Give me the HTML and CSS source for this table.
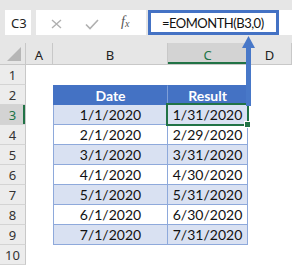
FILE: index.html
```html
<!DOCTYPE html>
<html lang="en">
<head>
  <meta charset="UTF-8">
  <title>EOMONTH</title>
  <link rel="stylesheet" href="styles.css">
</head>
<body>
  <div class="toolbar">
    <div class="namebox">C3</div>
    <div class="fxbox">
      <svg class="ico cancel" width="11" height="10" viewBox="0 0 11 10">
        <path d="M1 1 L10 9 M10 1 L1 9" stroke="#b0b0b0" stroke-width="1.4" fill="none"/>
      </svg>
      <svg class="ico enter" width="14" height="11" viewBox="0 0 14 11">
        <path d="M1 5.5 L5 9.5 L13 1" stroke="#b0b0b0" stroke-width="1.6" fill="none"/>
      </svg>
      <span class="ico fx">f<sub>x</sub></span>
    </div>
    <div class="formula"><span class="formula-text">=EOMONTH(B3,0)</span></div>
  </div>

  <div class="sheet">
    <div class="row colheads">
      <div class="corner"><span class="tri"></span></div>
      <div class="colh">A</div>
      <div class="colh">B</div>
      <div class="colh active">C</div>
      <div class="colh">D</div>
    </div>
    <div class="row"><div class="rowh">1</div><div></div><div></div><div></div><div></div></div>
    <div class="row"><div class="rowh">2</div><div></div><div class="t th first">Date</div><div class="t th">Result</div><div></div></div>
    <div class="row"><div class="rowh active">3</div><div></div><div class="t band first">1/1/2020</div><div class="t band sel">1/31/2020</div><div></div></div>
    <div class="row"><div class="rowh">4</div><div></div><div class="t first">2/1/2020</div><div class="t">2/29/2020</div><div></div></div>
    <div class="row"><div class="rowh">5</div><div></div><div class="t band first">3/1/2020</div><div class="t band">3/31/2020</div><div></div></div>
    <div class="row"><div class="rowh">6</div><div></div><div class="t first">4/1/2020</div><div class="t">4/30/2020</div><div></div></div>
    <div class="row"><div class="rowh">7</div><div></div><div class="t band first">5/1/2020</div><div class="t band">5/31/2020</div><div></div></div>
    <div class="row"><div class="rowh">8</div><div></div><div class="t first">6/1/2020</div><div class="t">6/30/2020</div><div></div></div>
    <div class="row"><div class="rowh">9</div><div></div><div class="t band first">7/1/2020</div><div class="t band">7/31/2020</div><div></div></div>
    <div class="row"><div class="rowh">10</div><div></div><div></div><div></div><div></div></div>
  </div>

  <svg class="arrow" width="13" height="70" viewBox="0 0 13 70">
    <polygon points="6.5,0 13,12 0,12" fill="#4878c8"/>
    <rect x="4" y="11" width="5" height="59" fill="#4878c8"/>
  </svg>
</body>
</html>
```

FILE: styles.css
```css
body {
  margin: 0;
  width: 292px;
  height: 266px;
  overflow: hidden;
  background-color: #fff;
  font-family: Lato, "Liberation Sans", sans-serif;
  position: relative;
}

.toolbar {
  display: flex;
  gap: 5px;
  height: 43px;
  padding: 10px 0 0 5px;
  box-sizing: border-box;
  background-color: #e6e6e6;
}

.namebox {
  width: 26px;
  height: 25px;
  background-color: #fff;
  font-family: "Noto Sans", sans-serif;
  font-size: 13px;
  color: #222;
  display: flex;
  align-items: center;
  padding-left: 6px;
  box-sizing: border-box;
}

.fxbox {
  width: 110px;
  height: 25px;
  background-color: #fff;
  position: relative;
}

.ico {
  position: absolute;
}

.cancel {
  left: 15px;
  top: 9px;
}

.enter {
  left: 49px;
  top: 9px;
}

.fx {
  left: 85px;
  top: 4px;
  font-family: "Liberation Serif", serif;
  font-style: italic;
  font-size: 14px;
  color: #555;
}

.fx sub {
  font-size: 10px;
  vertical-align: -1px;
}

.formula {
  flex: 1;
  height: 25px;
  margin-left: -3px;
  background-color: #fff;
}

.formula-text {
  display: flex;
  align-items: center;
  width: 131px;
  height: 25px;
  box-sizing: border-box;
  border: 3px solid #4472c4;
  padding-left: 11px;
  font-size: 13px;
  letter-spacing: -0.5px;
  color: #111;
  white-space: nowrap;
}

.sheet {
  display: flex;
  flex-direction: column;
}

.row {
  display: grid;
  grid-template-columns: 26px 27px 115px 80px 1fr;
  height: 20px;
}

.colheads {
  height: 22px;
  background-color: #e6e6e6;
  border-bottom: 1px solid #c8c8c8;
  box-sizing: border-box;
}

.corner {
  position: relative;
  border-right: 1px solid #c8c8c8;
}

.tri {
  position: absolute;
  right: 4px;
  bottom: 3px;
  width: 0;
  height: 0;
  border-left: 14px solid transparent;
  border-bottom: 14px solid #b6b6b6;
}

.colh, .rowh {
  display: flex;
  align-items: center;
  justify-content: center;
  font-family: "Noto Sans", sans-serif;
  font-size: 13px;
  color: #222;
}

.colh {
  border-right: 1px solid #c8c8c8;
  padding-top: 2px;
}

.colh.active {
  background-color: #d3d3d3;
  color: #217346;
  box-shadow: inset 0 -2px 0 #217346;
}

.rowh {
  background-color: #ececec;
  border-right: 1px solid #c8c8c8;
  border-bottom: 1px solid #d4d4d4;
  box-sizing: border-box;
  color: #333;
}

.rowh.active {
  background-color: #d3d3d3;
  color: #217346;
  box-shadow: inset -2px 0 0 #217346;
}

.t {
  display: flex;
  align-items: center;
  justify-content: center;
  border-right: 1px solid #8ea9db;
  border-bottom: 1px solid #8ea9db;
  box-sizing: border-box;
  font-size: 14px;
  color: #111;
}

.t.first {
  border-left: 1px solid #8ea9db;
}

.th {
  background-color: #4472c4;
  color: #fff;
  font-weight: bold;
  border-top: 1px solid #4472c4;
  border-bottom-color: #4472c4;
  border-right-color: #7f9fd8;
}

.th.first {
  border-left-color: #4472c4;
}

.band {
  background-color: #d9e1f2;
}

.sel {
  position: relative;
}

.sel::after {
  content: "";
  position: absolute;
  left: -2px;
  top: -2px;
  right: -2px;
  bottom: -2px;
  border: 2px solid #217346;
}

.sel::before {
  content: "";
  position: absolute;
  right: -4px;
  bottom: -4px;
  width: 5px;
  height: 5px;
  background-color: #217346;
  border: 1px solid #fff;
  z-index: 1;
}

.arrow {
  position: absolute;
  left: 242px;
  top: 36px;
}
```
